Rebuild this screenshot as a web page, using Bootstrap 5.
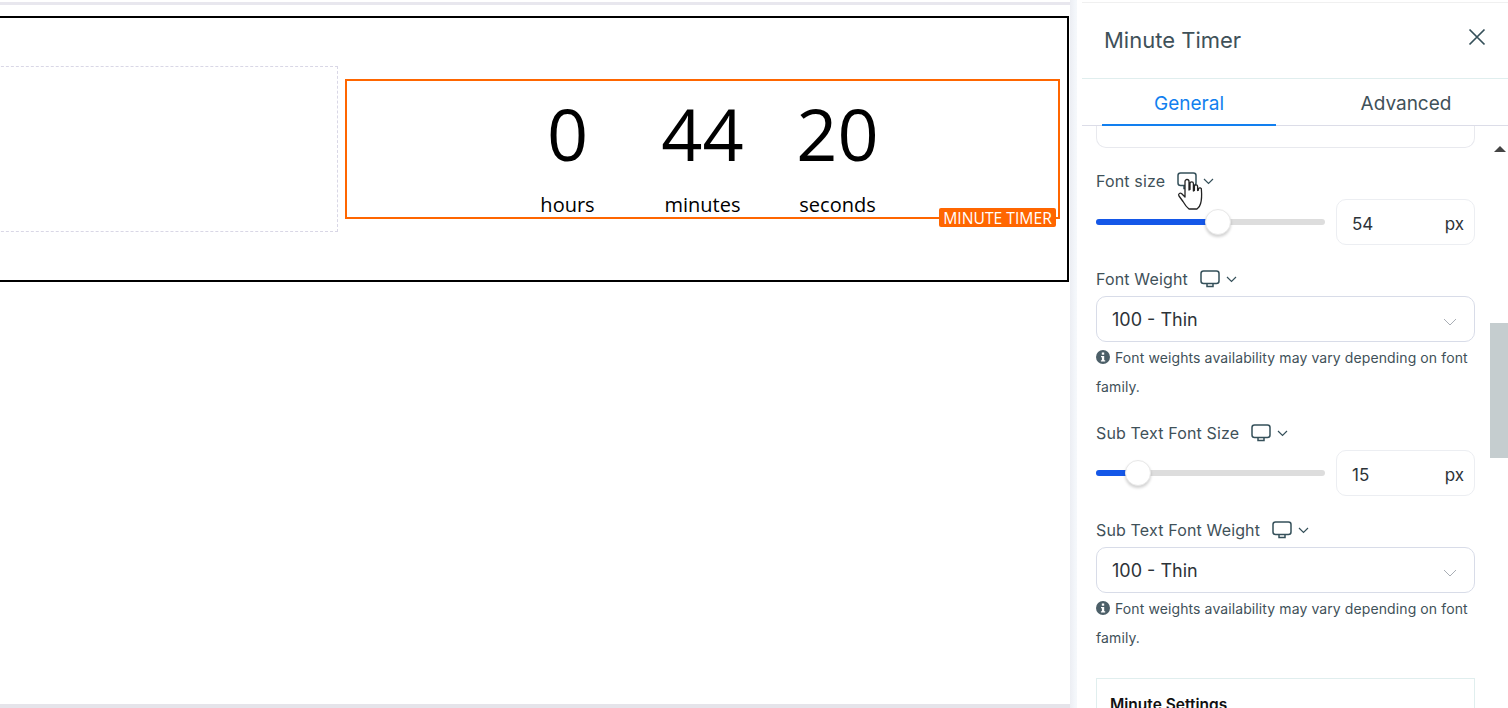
<!DOCTYPE html>
<html lang="en">
<head>
<meta charset="utf-8">
<title>Minute Timer</title>
<link href="https://cdn.jsdelivr.net/npm/bootstrap@5.3.0/dist/css/bootstrap.min.css" rel="stylesheet">
<style>
html,body{height:708px;overflow:hidden;background:#fff}
body{font-family:"Inter","Liberation Sans",sans-serif;color:#3f5159}
.stage{width:1070px;height:708px;padding-top:2px;overflow:hidden;flex:none;display:flex;flex-direction:column}
.topline{height:3px;background:#e8e7ee;flex:none;margin-bottom:11px;margin-right:-12px}
.botline{height:4px;background:#e5e4ea;flex:none;margin-top:auto}
.frame{width:1100px;height:266px;margin-left:-31px;border:2px solid #000;padding:48px 8px 0 0;align-items:flex-start;gap:7px;flex:none}
.dashbox{width:367px;height:166px;border:1px dashed #d9d7e6;flex:none}
.timerbox{width:715px;height:140px;margin-top:13px;border:2px solid #ff6600;font-family:"Open Sans",sans-serif;color:#000;position:relative;flex:none}
.tcell{width:135px;text-align:center}
.tnum{font-size:72px;line-height:72px;height:72px;margin-top:16px}
.tlabel{font-size:20px;line-height:28px;margin-top:22px;color:#000}
.tag{position:absolute;right:2px;bottom:-10px;height:19px;width:117px;background:#ff6600;color:#fff;font-size:15.7px;line-height:21px;text-align:center;border-radius:2px;white-space:nowrap}
.gutter{width:12px;background:linear-gradient(to right,#eceef3,#f3f6fa 40%,#f5f8fb 55%,#fff 60%);flex:none}
.side{width:426px;flex:none;height:708px;padding-top:2px}
.sidetop{height:1px;background:#f0f0f0;flex:none}
.shead{height:76px;border-bottom:1px solid #e0eeee;padding:0 22px 0 22px}
.stitle{font-size:22px;line-height:26px;font-weight:400;color:#3f5159;margin:0 0 1px}
.closer{margin-bottom:7px}
.tabset{height:47px;border-bottom:1px solid #dcdde8;padding-left:20px;gap:43px}
.tabitem{width:174px;height:47px;text-align:center;font-size:19px;line-height:50px;color:#3f5159;text-decoration:none}
.tabitem.on{color:#127fef;border-bottom:2px solid #127fef}
.sbody{height:582px;overflow:hidden}
.scol{width:408px;padding:0 15px 0 14px;flex:none}
.stub{height:22px;border:1px solid #e8e9ee;border-top:0;border-radius:0 0 10px 10px}
.flabel{font-size:16px;line-height:24px;height:24px;gap:12px;color:#3f5159;white-space:nowrap;letter-spacing:.15px;margin-top:22px}
.flabel.first{margin-top:21px}
.flabel.after-hint{margin-top:20px}
.mon{gap:6px}
.rowslider{gap:11px;margin-top:6px;height:46px}
.rowslider.tight{margin-top:5px}
.track{width:229px;height:6px;border-radius:3px;background:#dddddd;position:relative;flex:none}
.fill{height:6px;border-radius:3px;background:#1457e8}
.knob{position:absolute;top:-10px;width:26px;height:26px;margin-left:-13px;border-radius:50%;background:#fff;border:1px solid #e8e8e8;box-shadow:0 2px 3px rgba(0,0,0,.18)}
.pxbox{width:139px;height:46px;border:1px solid #eceef2;border-radius:10px;padding:5px 10px 0 15px;color:#2d3338;font-size:17px}
.pick{height:46px;border:1px solid #d8dce8;border-radius:10px;margin-top:5px;padding:0 17px 0 15px;font-size:18px;color:#2d3338}
.pick svg{margin-top:6px}
.hint{font-size:14px;line-height:29px;margin-top:1px;color:#3f5159;letter-spacing:.1px}
.hint svg{vertical-align:-1px;margin-right:1px}
.settings{height:60px;border:1px solid #e0eeee;border-bottom:0;margin-top:26px;padding:15px 13px;font-size:15.5px;line-height:22px;font-weight:600;color:#111}
.rail{width:18px;flex:none;position:relative}
.rail-up{position:absolute;left:4px;top:20px;width:0;height:0;border:6px solid transparent;border-top:0;border-bottom:6px solid #444}
.rail-thumb{position:absolute;left:0;top:197px;width:18px;height:135px;background:#c5cdcf}
.handc{position:absolute;left:95px;top:51px;pointer-events:none}
.relwrap{position:relative}
</style>
</head>
<body class="d-flex">
<main class="stage">
  <div class="topline"></div>
  <div class="frame d-flex">
    <div class="dashbox"></div>
    <div class="timerbox d-flex justify-content-center">
      <div class="tcell"><div class="tnum">0</div><div class="tlabel">hours</div></div>
      <div class="tcell"><div class="tnum">44</div><div class="tlabel">minutes</div></div>
      <div class="tcell"><div class="tnum">20</div><div class="tlabel">seconds</div></div>
      <span class="tag">MINUTE TIMER</span>
    </div>
  </div>
  <div class="botline"></div>
</main>
<div class="gutter"></div>
<aside class="side d-flex flex-column">
  <div class="sidetop"></div>
  <div class="shead d-flex justify-content-between align-items-center">
    <h2 class="stitle">Minute Timer</h2>
    <svg class="closer" width="18" height="18" viewBox="0 0 18 18"><path d="M1.500 1.500l15 15M16.500 1.500l-15 15" stroke="#35505a" stroke-width="1.700" fill="none"/></svg>
  </div>
  <div class="tabset d-flex">
    <a class="tabitem on" href="#">General</a>
    <a class="tabitem" href="#">Advanced</a>
  </div>
  <div class="sbody d-flex">
    <div class="scol relwrap">
      <div class="stub"></div>

      <div class="flabel first d-flex align-items-center">
        <span>Font size</span>
        <span class="mon d-flex align-items-center">
          <svg width="20" height="18" viewBox="0 0 20 18"><rect x="1" y="1" width="18" height="12.500" rx="2.500" fill="none" stroke="#35505a" stroke-width="1.500"/><path d="M7 14v2.500h6V14" fill="none" stroke="#35505a" stroke-width="1.500"/></svg>
          <svg width="11" height="7" viewBox="0 0 11 7"><path d="M1 1l4.500 4.500L10 1" fill="none" stroke="#35505a" stroke-width="1.200"/></svg>
        </span>
      </div>
      <svg class="handc" width="26" height="34" viewBox="0 0 26 34"><path d="M8 20V4.500a2 2 0 0 1 4 0V13l1-.5V6.500a1.700 1.700 0 0 1 3.400 0V14l1-.5V9.500a1.600 1.600 0 0 1 3.200 0v4l.8-.3V12a1.500 1.500 0 0 1 3 .8c.4 5 .3 10-.8 13.700-.6 2.500-2 4.500-3.600 5.500H12c-2-1.500-4-4-6-7.500L2 19c-1.300-2 1-3.500 2.500-2.500z" fill="#fff" stroke="#222" stroke-width="1.300" stroke-linejoin="round"/></svg>
      <div class="rowslider d-flex align-items-center">
        <div class="track"><div class="fill" style="width:122px"></div><span class="knob" style="left:122px"></span></div>
        <div class="pxbox d-flex justify-content-between align-items-center"><span>54</span><span>px</span></div>
      </div>

      <div class="flabel d-flex align-items-center">
        <span>Font Weight</span>
        <span class="mon d-flex align-items-center">
          <svg width="20" height="18" viewBox="0 0 20 18"><rect x="1" y="1" width="18" height="12.500" rx="2.500" fill="none" stroke="#35505a" stroke-width="1.500"/><path d="M7 14v2.500h6V14" fill="none" stroke="#35505a" stroke-width="1.500"/></svg>
          <svg width="11" height="7" viewBox="0 0 11 7"><path d="M1 1l4.500 4.500L10 1" fill="none" stroke="#35505a" stroke-width="1.200"/></svg>
        </span>
      </div>
      <div class="pick d-flex justify-content-between align-items-center"><span>100 - Thin</span>
        <svg width="14" height="8" viewBox="0 0 14 8"><path d="M1 1l6 6 6-6" fill="none" stroke="#a9aeb5" stroke-width="1"/></svg></div>
      <div class="hint"><svg width="14" height="14" viewBox="0 0 14 14"><circle cx="7" cy="7" r="7" fill="#4c5f68"/><rect x="5.800" y="2.500" width="2.400" height="2.200" fill="#fff"/><path d="M5 6h3.200v4.200H9.200v1.300H4.900v-1.300H5.900V7.300H5z" fill="#fff"/></svg> Font weights availability may vary depending on font family.</div>

      <div class="flabel after-hint d-flex align-items-center">
        <span>Sub Text Font Size</span>
        <span class="mon d-flex align-items-center">
          <svg width="20" height="18" viewBox="0 0 20 18"><rect x="1" y="1" width="18" height="12.500" rx="2.500" fill="none" stroke="#35505a" stroke-width="1.500"/><path d="M7 14v2.500h6V14" fill="none" stroke="#35505a" stroke-width="1.500"/></svg>
          <svg width="11" height="7" viewBox="0 0 11 7"><path d="M1 1l4.500 4.500L10 1" fill="none" stroke="#35505a" stroke-width="1.200"/></svg>
        </span>
      </div>
      <div class="rowslider tight d-flex align-items-center">
        <div class="track"><div class="fill" style="width:42px"></div><span class="knob" style="left:42px"></span></div>
        <div class="pxbox d-flex justify-content-between align-items-center"><span>15</span><span>px</span></div>
      </div>

      <div class="flabel d-flex align-items-center">
        <span>Sub Text Font Weight</span>
        <span class="mon d-flex align-items-center">
          <svg width="20" height="18" viewBox="0 0 20 18"><rect x="1" y="1" width="18" height="12.500" rx="2.500" fill="none" stroke="#35505a" stroke-width="1.500"/><path d="M7 14v2.500h6V14" fill="none" stroke="#35505a" stroke-width="1.500"/></svg>
          <svg width="11" height="7" viewBox="0 0 11 7"><path d="M1 1l4.500 4.500L10 1" fill="none" stroke="#35505a" stroke-width="1.200"/></svg>
        </span>
      </div>
      <div class="pick d-flex justify-content-between align-items-center"><span>100 - Thin</span>
        <svg width="14" height="8" viewBox="0 0 14 8"><path d="M1 1l6 6 6-6" fill="none" stroke="#a9aeb5" stroke-width="1"/></svg></div>
      <div class="hint"><svg width="14" height="14" viewBox="0 0 14 14"><circle cx="7" cy="7" r="7" fill="#4c5f68"/><rect x="5.800" y="2.500" width="2.400" height="2.200" fill="#fff"/><path d="M5 6h3.200v4.200H9.200v1.300H4.900v-1.300H5.900V7.300H5z" fill="#fff"/></svg> Font weights availability may vary depending on font family.</div>

      <div class="settings">Minute Settings</div>
    </div>
    <div class="rail"><span class="rail-up"></span><span class="rail-thumb"></span></div>
  </div>
</aside>
</body>
</html>
